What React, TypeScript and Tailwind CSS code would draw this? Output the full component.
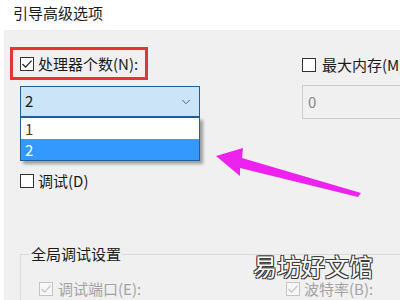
import { ChevronDown } from 'lucide-react'

function Check({ checked, disabled }: { checked?: boolean; disabled?: boolean }) {
  return (
    <span
      className={
        'flex h-[14px] w-[14px] shrink-0 items-center justify-center border ' +
        (disabled ? 'border-[#c4c4c4] bg-[#f7f7f7]' : 'border-[#333333] bg-white')
      }
    >
      {checked && (
        <svg width="12" height="12" viewBox="0 0 12 12">
          <path
            d="M1.5 6 L4.6 9.1 L10.6 2.6"
            fill="none"
            stroke={disabled ? '#c4c4c4' : '#222222'}
            strokeWidth="1.3"
          />
        </svg>
      )}
    </span>
  )
}

export default function App() {
  return (
    <div className="relative h-[300px] w-[400px] overflow-hidden bg-white font-['Noto_Sans_CJK_SC','Noto_Sans',sans-serif] text-[15px] text-[#1a1a1a]">
      <div className="h-[30px] pl-[13px] pt-[1px] leading-[24px]">引导高级选项</div>

      <div className="ml-[4px] h-[270px] bg-[#f0f0f0]">
        <div className="flex">
          {/* left column */}
          <div className="relative w-[298px] shrink-0 pl-[6px] pt-[17px]">
            <div className="flex h-[33px] w-[138px] items-center gap-[4px] border-[3px] border-[#e2353a] pl-[7px] leading-none">
              <Check checked />
              <span>处理器个数(N):</span>
            </div>
            <div className="ml-[10px] mt-[6px] flex h-[31px] w-[180px] items-center justify-between border border-[#1f5f9c] bg-[#cce4f7] pl-[4px] pr-[6px]">
              <span>2</span>
              <ChevronDown className="h-[14px] w-[14px] text-[#555]" strokeWidth={1.5} />
            </div>
            <div className="absolute left-[16px] top-[87px] z-10 w-[180px] border border-[#1f5f9c] bg-white shadow-[3px_3px_3px_rgba(0,0,0,0.35)]">
              <div className="h-[21px] pl-[4px] leading-[21px] text-[#5a3a1a]">1</div>
              <div className="h-[21px] bg-[#3399ff] pl-[4px] leading-[21px] text-white">2</div>
            </div>
            <div className="ml-[10px] mt-[56px] flex items-center gap-[4px] leading-none">
              <Check />
              <span>调试(D)</span>
            </div>
          </div>

          {/* right column */}
          <div className="min-w-0 pt-[27px]">
            <div className="flex items-center gap-[6px] whitespace-nowrap leading-none">
              <Check />
              <span>最大内存(M)</span>
            </div>
            <div className="mt-[13px] flex h-[34px] w-[120px] items-center border border-[#cccccc] bg-[#f0f0f0] pl-[5px] text-[#888]">
              0
            </div>
          </div>
        </div>

        {/* group box */}
        <div className="relative ml-[16px] mt-[66px] h-[60px] border-l border-t border-[#dcdcdc]">
          <span className="absolute left-[9px] top-[-12px] bg-[#f0f0f0] px-[1px] leading-[22px]">全局调试设置</span>
          <div className="flex pt-[26px] text-[#a3a3a3]">
            <div className="flex w-[265px] shrink-0 items-center gap-[5px] pl-[18px] leading-none">
              <Check checked disabled />
              <span>调试端口(E):</span>
            </div>
            <div className="flex items-center gap-[4px] whitespace-nowrap leading-none">
              <Check checked disabled />
              <span>波特率(B):</span>
            </div>
          </div>
        </div>
      </div>

      {/* annotation arrow */}
      <svg className="absolute left-0 top-0" width="400" height="300">
        <polygon
          points="216,156 243,148 242,158 361,193 358,197 240,168 240,176"
          fill="#ee22ee"
        />
      </svg>

      <div className="absolute left-[253px] top-[250px] text-[24px] leading-[32px] text-white [text-shadow:1px_1px_0_#3a3a3a,-1px_-1px_0_#3a3a3a,1px_-1px_0_#3a3a3a,-1px_1px_0_#3a3a3a]">
        易坊好文馆
      </div>
    </div>
  )
}
